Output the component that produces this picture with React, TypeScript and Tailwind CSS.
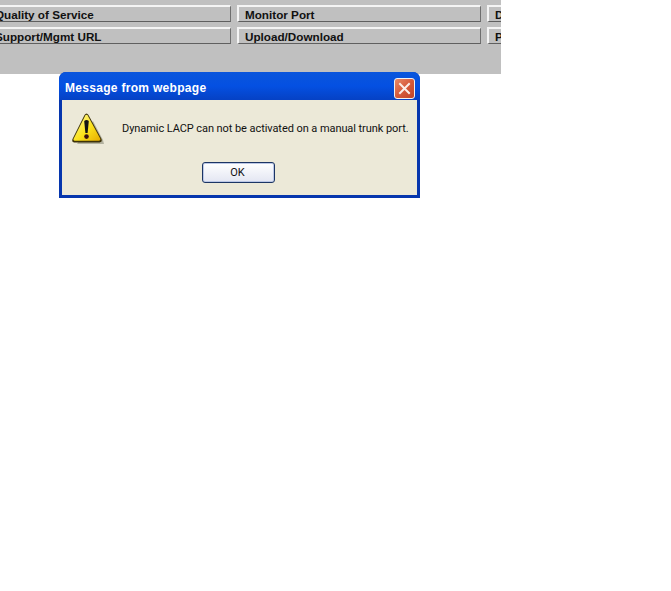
const rows = [
  ['Quality of Service', 'Monitor Port', 'Diagnostics'],
  ['Support/Mgmt URL', 'Upload/Download', 'Password'],
];

function MenuButton({ label }: { label: string }) {
  return (
    <div className="h-[17px] w-[244px] shrink-0 overflow-hidden border-t-2 border-r border-b border-l-2 border-t-[#f4f4f4] border-r-[#6e6e6e] border-b-[#5f5f5f] border-l-[#f4f4f4] bg-[#c0c0c0] pl-[6px] text-[11.7px] leading-[15px] font-bold whitespace-nowrap text-[#111]">
      {label}
    </div>
  );
}

function WarningIcon() {
  return (
    <svg width="34" height="34" viewBox="0 0 34 34" className="shrink-0">
      <defs>
        <linearGradient id="warn" x1="0" y1="0" x2="1" y2="1">
          <stop offset="0" stopColor="#fffaa0" />
          <stop offset="0.55" stopColor="#fbe21c" />
          <stop offset="1" stopColor="#e6ac00" />
        </linearGradient>
      </defs>
      <path d="M6 33 L33 33 L32 29 L22 10 Z" fill="#8d8d7c" opacity="0.6" />
      <path d="M13.5 4 Q15.5 1 17.5 4 L30.5 28 Q31.5 31 28.5 31.5 L3 31.5 Q0.5 31 1.5 28 Z" fill="#3d3208" />
      <path d="M14.3 4.5 Q15.5 3 16.7 4.5 L29.3 27.8 Q30 29.5 28 29.8 L3.5 29.8 Q1.8 29.5 2.6 27.8 Z" fill="url(#warn)" />
      <path d="M13.2 10 Q15.5 8 17.8 10 L16.6 22 L14.4 22 Z" fill="#141414" />
      <circle cx="15.5" cy="25.6" r="2.3" fill="#3a1010" />
    </svg>
  );
}

function CloseIcon() {
  return (
    <div className="flex h-[21px] w-[21px] items-center justify-center rounded-[3px] border border-[#f2f2f2] bg-gradient-to-br from-[#e88a68] via-[#d65a3a] to-[#c04428]">
      <svg width="13" height="13" viewBox="0 0 13 13">
        <path d="M2 2 L11 11 M11 2 L2 11" stroke="#fbeee8" strokeWidth="2" strokeLinecap="square" fill="none" />
      </svg>
    </div>
  );
}

export default function App() {
  return (
    <div className="relative h-[591px] w-[671px] overflow-hidden bg-white font-['Liberation_Sans',sans-serif]">
      <div className="flex h-[74px] w-[501px] flex-col gap-[5px] overflow-hidden bg-[#c0c0c0] pt-[5px]">
        {rows.map((row) => (
          <div key={row[0]} className="-ml-[13px] flex gap-[6px]">
            {row.map((label) => (
              <MenuButton key={label} label={label} />
            ))}
          </div>
        ))}
      </div>

      {/* dialog sits over the page */}
      <div className="absolute top-[72px] left-[59px] flex h-[126px] w-[361px] flex-col overflow-hidden rounded-t-[7px] bg-[#0636ad]">
        <div className="flex h-[28px] shrink-0 items-center justify-between bg-gradient-to-b from-[#0a55dc] via-[#0450e2] to-[#0541c4] pt-[4px] pr-[5px] pl-[6px]">
          <span className="text-[12px] font-bold tracking-[0.3px] text-white">
            Message from webpage
          </span>
          <CloseIcon />
        </div>
        <div className="mx-[3px] mb-[3px] flex flex-1 flex-col bg-[#ece9d8]">
          <div className="flex items-start pt-[11px] pl-[9px]">
            <WarningIcon />
            <span className="mt-[11px] ml-[17px] font-['Roboto',sans-serif] text-[11px] leading-[13px] tracking-[-0.07px] whitespace-nowrap text-[#111]">
              Dynamic LACP can not be activated on a manual trunk port.
            </span>
          </div>
          <div className="mt-[17px] flex justify-center">
            <div className="-ml-[2px] flex h-[21px] w-[73px] items-center justify-center rounded-[3px] border border-[#1c3564] bg-gradient-to-b from-white to-[#e3e6f2] pt-[2px] pr-[2px] font-['Roboto',sans-serif] text-[11px] text-[#111] shadow-[inset_0_0_0_1px_#bcc8e6]">
              OK
            </div>
          </div>
        </div>
      </div>
    </div>
  );
}
